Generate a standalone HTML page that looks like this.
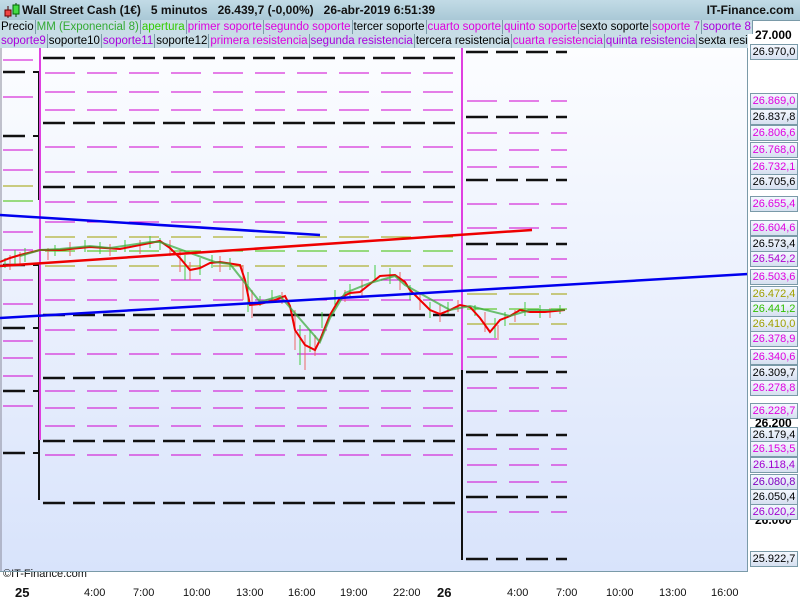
<!DOCTYPE html>
<html><head><meta charset="utf-8"><style>
*{margin:0;padding:0}
body{width:800px;height:600px;overflow:hidden;background:#fff;font-family:"Liberation Sans",sans-serif;position:relative}
#hdr{position:absolute;left:0;top:0;width:800px;height:20px;background:linear-gradient(#c2dbe6,#a9c8d6);border-bottom:1px solid #7a9aa8}
#hdr .t{position:absolute;left:22px;top:3px;font-size:12px;font-weight:bold;color:#111;white-space:pre}
#hdr .r{position:absolute;right:6px;top:3px;font-size:12px;font-weight:bold;color:#111}
.row{position:absolute;left:0;height:14px;font-size:11.5px;line-height:14px;white-space:nowrap;background:#fff}
.row span{display:inline-block;background:#c8dde6;border-right:1px solid #7a9aa8;padding:0 1px;margin-right:0}
.lbl{position:absolute;left:750px;width:46px;height:14px;border:1px solid #7a9aa8;background:linear-gradient(#f4f8ff,#d6e0f0);font-size:11px;line-height:14px;text-align:center}
.big{position:absolute;left:755px;font-size:12px;font-weight:bold}
.tk{position:absolute;font-size:11px;color:#111;top:587px}
</style></head><body>
<div id="hdr"><svg style="position:absolute;left:3px;top:2px" width="18" height="18"><line x1="5" y1="4" x2="5" y2="16" stroke="#400"/><rect x="2" y="8" width="6" height="6" fill="#e44" stroke="#600"/><line x1="13" y1="1" x2="13" y2="15" stroke="#040"/><rect x="10" y="3" width="6" height="9" fill="#4d4" stroke="#060"/></svg><div class="t">Wall Street Cash (1€)   5 minutos   26.439,7 (-0,00%)   26-abr-2019 6:51:39</div><div class="r">IT-Finance.com</div></div>
<div class="row" style="top:20px"><span>Precio</span><span style="color:#3a3">MM (Exponencial 8)</span><span style="color:#3c0">apertura</span><span style="color:#d0d">primer soporte</span><span style="color:#d0d">segundo soporte</span><span>tercer soporte</span><span style="color:#d0d">cuarto soporte</span><span style="color:#d0d">quinto soporte</span><span>sexto soporte</span><span style="color:#d0d">soporte 7</span><span style="color:#a0d">soporte 8</span></div>
<div class="row" style="top:34px;width:748px;overflow:hidden"><span style="color:#a0d">soporte9</span><span>soporte10</span><span style="color:#a0d">soporte11</span><span>soporte12</span><span style="color:#d0d">primera resistencia</span><span style="color:#a0d">segunda resistencia</span><span>tercera resistencia</span><span style="color:#d0d">cuarta resistencia</span><span style="color:#a0d">quinta resistencia</span><span>sexta resistencia</span></div>
<svg style="position:absolute;left:0;top:48px" width="748" height="523" viewBox="0 48 748 523">
<defs><linearGradient id="g" x1="0" y1="0" x2="0" y2="1"><stop offset="0" stop-color="#fcfdff"/><stop offset="1" stop-color="#d8e3fb"/></linearGradient></defs>
<rect x="0" y="48" width="748" height="523" fill="url(#g)"/>
<line x1="1" y1="48" x2="1" y2="571" stroke="#889"/>
<g stroke-width="1" fill="none">
<g stroke="#d000d0" stroke-dasharray="30 12">
<path d="M45 73H462M45 92H462M45 110H462M45 147H462M45 172H462M45 202H462M45 222H462M45 280H462M45 300H462M45 330H462M45 354H462M45 391H462M45 408H462M45 426H462M45 455H462"/>
<path d="M467 101H567M467 133H567M467 150H567M467 167H567M467 204H567M467 228H567M467 259H567M467 277H567M467 339H567M467 357H567M467 388H567M467 411H567M467 449H567M467 465H567M467 482H567M467 512H567"/>
<path d="M3 60H40M3 97H40M3 150H40M3 170H40M3 232H40M3 250H40M3 280H40M3 304H40M3 341H40M3 358H40M3 376H40M3 406H40"/>
</g>
<g stroke="#a0a000" stroke-dasharray="30 12"><path d="M45 237H462M45 266H462M467 294H567M467 324H567M3 186H40"/></g>
<g stroke="#40c000" stroke-dasharray="30 12"><path d="M45 251H462M467 309H567M3 201H40"/></g>
<g stroke="#111" stroke-width="2.5" stroke-dasharray="22 8">
<path d="M43 58H462M43 123H462M43 187H462M43 315H462M43 378H462M43 441H462M43 503H462"/>
<path d="M466 52H567M466 117H567M466 180H567M466 244H567M466 372H567M466 435H567M466 497H567M466 559H567"/>
<path d="M3 72H30M3 136H30M3 265H30M3 328H30M3 391H30M3 453H30"/>
</g>
<g stroke="#111" stroke-width="2"><path d="M33 72H39V140M33 136H39V200M33 265H39V330M33 328H39V395M33 391H39V455M33 453H39V500M462 52V560"/></g>
<line x1="40" y1="48" x2="40" y2="440" stroke="#e040e0" stroke-width="2"/>
<line x1="462" y1="48" x2="462" y2="370" stroke="#e040e0" stroke-width="2"/>
</g>
<g stroke-width="1" fill="none">
<path stroke="#4c4" d="M5 258V268M15 250V265M25 248V262M55 245V256M85 240V252M100 242V254M125 240V252M150 236V248M160 238V250M185 255V280M200 258V275M212 255V268M230 258V270M248 272V312M260 296V306M272 290V302M300 325V365M310 330V352M322 312V328M335 290V305M350 284V298M375 265V280M390 268V284M410 285V300M430 302V318M448 302V314M475 305V316M495 318V338M505 312V326M525 302V316M540 305V318M560 305V314"/>
<path stroke="#e66" d="M10 255V270M20 252V266M48 248V260M70 242V256M110 244V256M140 240V254M170 240V256M180 250V272M190 262V280M220 256V272M243 265V300M252 290V318M282 292V304M295 310V350M305 335V370M315 335V356M345 290V302M362 280V296M400 272V290M420 292V310M440 305V322M458 300V312M485 312V332M498 325V340M515 310V322M550 308V318"/>
</g>
<polyline fill="none" stroke-width="2" stroke="#e00" points="0,262 10,258 20,255 40,250 60,250 90,247 120,249 145,244 160,241 170,248 180,258 190,270 200,268 210,263 220,262 240,265 245,280 250,305 260,304 275,300 285,296 290,306 295,330 305,345 315,350 320,340 330,315 340,298 350,293 360,292 370,284 380,276 395,275 405,282 410,290 420,300 430,310 440,314 450,310 460,305 470,307 480,318 490,332 500,320 510,316 520,310 530,312 545,312 565,310"/>
<polyline fill="none" stroke-width="2" stroke="#3a3" points="20,256 40,250 60,249 90,246 110,248 130,245 150,242 160,242 215,262 230,264 260,302 280,296 320,342 330,318 345,293 370,283 395,276 405,285 450,310 470,306 510,316 530,310 565,310" opacity="0.7"/>
<line x1="0" y1="215" x2="320" y2="235" stroke="#00e" stroke-width="2.5"/>
<line x1="0" y1="318" x2="748" y2="274" stroke="#00e" stroke-width="2.5"/>
<line x1="0" y1="266" x2="532" y2="230" stroke="#e00" stroke-width="2.5"/>
</svg>
<div style="position:absolute;left:3px;top:568px;font-size:11px;color:#111">©IT-Finance.com</div>
<div style="position:absolute;left:747px;top:48px;width:1px;height:523px;background:#7a9aa8"></div>
<div style="position:absolute;left:0;top:571px;width:748px;height:1px;background:#7a9aa8"></div>
<div class="big" style="top:28px">27.000</div>
<div class="big" style="top:416px">26.200</div>
<div class="big" style="top:513px">26.000</div>
<div class="lbl" style="top:44px">26.970,0</div>
<div class="lbl" style="top:93px;color:#e000e0">26.869,0</div>
<div class="lbl" style="top:109px">26.837,8</div>
<div class="lbl" style="top:125px;color:#e000e0">26.806,6</div>
<div class="lbl" style="top:142px;color:#e000e0">26.768,0</div>
<div class="lbl" style="top:159px;color:#e000e0">26.732,1</div>
<div class="lbl" style="top:174px">26.705,6</div>
<div class="lbl" style="top:196px;color:#e000e0">26.655,4</div>
<div class="lbl" style="top:220px;color:#e000e0">26.604,6</div>
<div class="lbl" style="top:236px">26.573,4</div>
<div class="lbl" style="top:251px;color:#b000d0">26.542,2</div>
<div class="lbl" style="top:269px;color:#e000e0">26.503,6</div>
<div class="lbl" style="top:286px;color:#a0a000">26.472,4</div>
<div class="lbl" style="top:301px;color:#30c000">26.441,2</div>
<div class="lbl" style="top:316px;color:#a0a000">26.410,0</div>
<div class="lbl" style="top:331px;color:#e000e0">26.378,9</div>
<div class="lbl" style="top:349px;color:#e000e0">26.340,6</div>
<div class="lbl" style="top:365px">26.309,7</div>
<div class="lbl" style="top:380px;color:#e000e0">26.278,8</div>
<div class="lbl" style="top:403px;color:#e000e0">26.228,7</div>
<div class="lbl" style="top:427px">26.179,4</div>
<div class="lbl" style="top:441px;color:#e000e0">26.153,5</div>
<div class="lbl" style="top:457px;color:#a000d0">26.118,4</div>
<div class="lbl" style="top:474px;color:#8000c0">26.080,8</div>
<div class="lbl" style="top:489px">26.050,4</div>
<div class="lbl" style="top:504px;color:#a000d0">26.020,2</div>
<div class="lbl" style="top:551px">25.922,7</div>
<div class="tk" style="left:15px;font-weight:bold;font-size:13px;top:585px">25</div>
<div class="tk" style="left:84px">4:00</div>
<div class="tk" style="left:133px">7:00</div>
<div class="tk" style="left:183px">10:00</div>
<div class="tk" style="left:236px">13:00</div>
<div class="tk" style="left:288px">16:00</div>
<div class="tk" style="left:340px">19:00</div>
<div class="tk" style="left:393px">22:00</div>
<div class="tk" style="left:437px;font-weight:bold;font-size:13px;top:585px">26</div>
<div class="tk" style="left:507px">4:00</div>
<div class="tk" style="left:556px">7:00</div>
<div class="tk" style="left:606px">10:00</div>
<div class="tk" style="left:659px">13:00</div>
<div class="tk" style="left:711px">16:00</div>
</body></html>
